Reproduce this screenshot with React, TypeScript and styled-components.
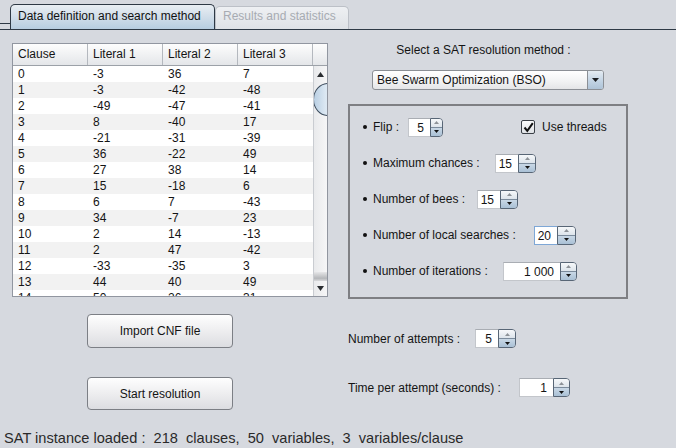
import React from 'react';
import styled, { createGlobalStyle } from 'styled-components';

const Global = createGlobalStyle`
  html, body { margin: 0; padding: 0; background: #d6d9df; }
  body {
    font-family: "Liberation Sans", Arial, sans-serif;
    font-size: 12px;
    color: #141414;
  }
  * { box-sizing: border-box; }
`;

const Page = styled.div`
  width: 676px;
  height: 448px;
  display: flex;
  flex-direction: column;
  background: #d6d9df;
  overflow: hidden;
`;

/* ---------- Tabs ---------- */
const TabStrip = styled.div`
  height: 30px;
  display: flex;
  align-items: flex-start;
  border-bottom: 1px solid #2e3945;
  flex: none;
`;

const TabLead = styled.div`
  width: 10px;
  height: 24px;
  border-bottom: 1px solid #2e3945;
`;

const Tab = styled.div<{ $active?: boolean; $w: number }>`
  width: ${(p) => p.$w}px;
  margin-top: ${(p) => (p.$active ? 4 : 6)}px;
  height: ${(p) => (p.$active ? 25 : 23)}px;
  padding: ${(p) => (p.$active ? '4px' : '2px')} 0 0 7px;
  line-height: 14px;
  font-size: 12px;
  white-space: nowrap;
  border: 1px solid ${(p) => (p.$active ? '#2e3945' : '#bcc0c7')};
  border-bottom: none;
  border-radius: 5px 5px 0 0;
  color: ${(p) => (p.$active ? '#111' : '#a7abb2')};
  background: ${(p) =>
    p.$active
      ? 'linear-gradient(#e9eef3 0%, #d3dfea 45%, #b7cde0 100%)'
      : 'linear-gradient(#eef0f3, #dfe2e6)'};
`;

/* ---------- Layout ---------- */
const Main = styled.div`
  flex: 1;
  display: flex;
  padding-top: 13px;
`;

const LeftCol = styled.div`
  width: 348px;
  padding-left: 12px;
  display: flex;
  flex-direction: column;
`;

const RightCol = styled.div`
  width: 280px;
  display: flex;
  flex-direction: column;
`;

/* ---------- Table ---------- */
const TableFrame = styled.div`
  width: 316px;
  height: 254px;
  border: 1px solid #9196a0;
  background: #fff;
  display: grid;
  grid-template-rows: 22px 1fr;
`;

const HeaderRow = styled.div`
  display: grid;
  grid-template-columns: 75px 75px 75px 75px 14px;
  background: linear-gradient(#fdfdfd, #e4e6e9);
  border-bottom: 1px solid #9ca1a8;
`;

const HeadCell = styled.div`
  padding-left: 5px;
  line-height: 21px;
  border-right: 1px solid #b4b8be;
  &:last-child { border-right: none; }
`;

const Body = styled.div`
  display: flex;
  overflow: hidden;
`;

const Rows = styled.div`
  width: 300px;
  overflow: hidden;
`;

const Row = styled.div<{ $odd: boolean }>`
  display: grid;
  grid-template-columns: 75px 75px 75px 75px;
  height: 16px;
  line-height: 16px;
  background: ${(p) => (p.$odd ? '#f2f2f2' : '#ffffff')};
`;

const Cell = styled.div`
  padding-left: 5px;
`;

const ScrollTrack = styled.div`
  width: 14px;
  display: flex;
  flex-direction: column;
  overflow: hidden;
  background: linear-gradient(to right, #e9eaec, #f6f6f7);
  border-left: 1px solid #c9ccd1;
`;

const ScrollBtn = styled.div<{ $h: number }>`
  height: ${(p) => p.$h}px;
  flex: none;
  display: flex;
  align-items: center;
  justify-content: center;
`;

const Thumb = styled.div`
  flex: none;
  width: 30px;
  height: 33px;
  margin-left: -1px;
  border-radius: 50%;
  border: 1px solid #3d4c5d;
  background: linear-gradient(to right, #b9cfe3, #dbe7f2 40%, #eef4fa);
`;

const TrackFill = styled.div`
  flex: 1;
`;

const TrackShade = styled.div`
  height: 9px;
  flex: none;
  background: linear-gradient(#e6e6e8, #b5b7ba 70%, #d8d9db);
`;

/* ---------- Buttons ---------- */
const PushButton = styled.button<{ $top: number; $h: number }>`
  margin: ${(p) => p.$top}px 0 0 75px;
  width: 146px;
  height: ${(p) => p.$h}px;
  border: 1px solid #7c7f85;
  border-radius: 4px;
  background: linear-gradient(#fefefe, #ececee 55%, #dcdde1);
  font-family: "Liberation Sans", Arial, sans-serif;
  font-size: 12px;
  color: #141414;
  padding: 0;
`;

/* ---------- Right side ---------- */
const MethodLabel = styled.div`
  line-height: 14px;
  text-align: center;
  padding-right: 9px;
`;

const Combo = styled.div`
  margin: 13px 0 0 24px;
  width: 232px;
  height: 20px;
  border: 1px solid #8b8f95;
  border-radius: 3px;
  display: flex;
  align-items: stretch;
  overflow: hidden;
  background: linear-gradient(#ffffff, #f1f2f3 60%, #e4e5e7);
`;

const ComboText = styled.div`
  flex: 1;
  padding-left: 4px;
  line-height: 18px;
`;

const ComboArrow = styled.div`
  width: 16px;
  border-left: 1px solid #8b8f95;
  background: linear-gradient(#e4ebf2, #c3d4e4 55%, #aec3d7);
  display: flex;
  align-items: center;
  justify-content: center;
`;

const ParamBox = styled.div`
  margin-top: 14px;
  height: 195px;
  border: 2px solid #7e7f83;
  padding: 11px 0 0 13px;
  display: flex;
  flex-direction: column;
  gap: 16px;
`;

const ParamRow = styled.div`
  height: 20px;
  display: flex;
  align-items: center;
`;

const Bullet = styled.span`
  width: 4px;
  height: 4px;
  border-radius: 50%;
  background: #111;
  margin-right: 6px;
  flex: none;
`;

const Label = styled.span<{ $w: number }>`
  width: ${(p) => p.$w}px;
  flex: none;
  white-space: nowrap;
`;

const Spinner = styled.div`
  display: flex;
  height: 19px;
  flex: none;
`;

const SpinField = styled.div<{ $w: number; $focus?: boolean }>`
  width: ${(p) => p.$w}px;
  height: 100%;
  background: #fff;
  border: 1px solid ${(p) => (p.$focus ? '#7ea7d6' : '#c3c6cb')};
  border-top-color: ${(p) => (p.$focus ? '#7ea7d6' : '#a9adb3')};
  border-right: none;
  text-align: right;
  padding-right: 6px;
  line-height: 18px;
  font-size: 12px;
`;

const SpinButtons = styled.div<{ $w: number }>`
  width: ${(p) => p.$w}px;
  height: 100%;
  display: flex;
  flex-direction: column;
  border: 1px solid #586676;
  border-radius: 0 4px 4px 0;
  overflow: hidden;
`;

const SpinHalf = styled.div<{ $down?: boolean }>`
  flex: 1;
  display: flex;
  align-items: center;
  justify-content: center;
  background: ${(p) =>
    p.$down
      ? 'linear-gradient(#c9d8e6, #a9c0d5)'
      : 'linear-gradient(#f6f8fa, #dde4eb)'};
  border-top: ${(p) => (p.$down ? '1px solid #7b8b9c' : 'none')};
`;

const CheckWrap = styled.div`
  margin-left: 78px;
  display: flex;
  align-items: center;
  gap: 7px;
`;

const CheckBox = styled.div`
  width: 14px;
  height: 14px;
  border: 1px solid #3a3f46;
  border-radius: 2px;
  background: linear-gradient(#fbfbfc, #dfe2e6);
  display: flex;
  align-items: center;
  justify-content: center;
`;

const PlainRow = styled.div<{ $top: number }>`
  margin-top: ${(p) => p.$top}px;
  height: 19px;
  display: flex;
  align-items: center;
`;

const Status = styled.div`
  height: 19px;
  flex: none;
  padding-left: 4px;
  line-height: 19px;
  font-size: 14.6px;
  color: #2a2a2a;
  white-space: pre;
`;

/* ---------- Small drawings ---------- */
const Tri = ({ dir, color, w = 7, h = 4 }: { dir: 'up' | 'down'; color: string; w?: number; h?: number }) => (
  <svg width={w} height={h} viewBox={`0 0 ${w} ${h}`} style={{ display: 'block' }}>
    {dir === 'up' ? (
      <polygon points={`0,${h} ${w},${h} ${w / 2},0`} fill={color} />
    ) : (
      <polygon points={`0,0 ${w},0 ${w / 2},${h}`} fill={color} />
    )}
  </svg>
);

const Spin = ({ value, field, btn, focus }: { value: string; field: number; btn: number; focus?: boolean }) => (
  <Spinner>
    <SpinField $w={field} $focus={focus}>{value}</SpinField>
    <SpinButtons $w={btn}>
      <SpinHalf>
        <Tri dir="up" color="#8d9298" w={5} h={3} />
      </SpinHalf>
      <SpinHalf $down>
        <Tri dir="down" color="#111" w={5} h={3} />
      </SpinHalf>
    </SpinButtons>
  </Spinner>
);

const rows: string[][] = [
  ['0', '-3', '36', '7'],
  ['1', '-3', '-42', '-48'],
  ['2', '-49', '-47', '-41'],
  ['3', '8', '-40', '17'],
  ['4', '-21', '-31', '-39'],
  ['5', '36', '-22', '49'],
  ['6', '27', '38', '14'],
  ['7', '15', '-18', '6'],
  ['8', '6', '7', '-43'],
  ['9', '34', '-7', '23'],
  ['10', '2', '14', '-13'],
  ['11', '2', '47', '-42'],
  ['12', '-33', '-35', '3'],
  ['13', '44', '40', '49'],
  ['14', '50', '26', '31'],
];

const params = [
  { label: 'Maximum chances :', w: 122, value: '15', field: 23, btn: 18 },
  { label: 'Number of bees :', w: 104, value: '15', field: 23, btn: 18 },
  { label: 'Number of local searches :', w: 161, value: '20', field: 23, btn: 19, focus: true },
  { label: 'Number of iterations :', w: 130, value: '1 000', field: 57, btn: 17 },
];

export default function App() {
  return (
    <Page>
      <Global />
      <TabStrip>
        <TabLead />
        <Tab $active $w={205}>Data definition and search method</Tab>
        <Tab $w={134}>Results and statistics</Tab>
      </TabStrip>
      <Main>
        <LeftCol>
          <TableFrame>
            <HeaderRow>
              <HeadCell>Clause</HeadCell>
              <HeadCell>Literal 1</HeadCell>
              <HeadCell>Literal 2</HeadCell>
              <HeadCell>Literal 3</HeadCell>
              <HeadCell />
            </HeaderRow>
            <Body>
              <Rows>
                {rows.map((r, i) => (
                  <Row key={i} $odd={i % 2 === 1}>
                    {r.map((c, j) => (
                      <Cell key={j}>{c}</Cell>
                    ))}
                  </Row>
                ))}
              </Rows>
              <ScrollTrack>
                <ScrollBtn $h={17}>
                  <Tri dir="up" color="#2a2d31" w={7} h={5} />
                </ScrollBtn>
                <Thumb />
                <TrackFill />
                <TrackShade />
                <ScrollBtn $h={15}>
                  <Tri dir="down" color="#2a2d31" w={7} h={5} />
                </ScrollBtn>
              </ScrollTrack>
            </Body>
          </TableFrame>
          <PushButton $top={17} $h={34}>Import CNF file</PushButton>
          <PushButton $top={29} $h={33}>Start resolution</PushButton>
        </LeftCol>
        <RightCol>
          <MethodLabel>Select a SAT resolution method :</MethodLabel>
          <Combo>
            <ComboText>Bee Swarm Optimization (BSO)</ComboText>
            <ComboArrow>
              <Tri dir="down" color="#1a1d21" w={7} h={4} />
            </ComboArrow>
          </Combo>
          <ParamBox>
            <ParamRow>
              <Bullet />
              <Label $w={35}>Flip :</Label>
              <Spin value="5" field={22} btn={13} />
              <CheckWrap>
                <CheckBox>
                  <svg width="11" height="11" viewBox="0 0 11 11">
                    <path d="M1.5 5.5 L4.3 8.8 L9.8 1.2" fill="none" stroke="#111" strokeWidth="2" />
                  </svg>
                </CheckBox>
                <span>Use threads</span>
              </CheckWrap>
            </ParamRow>
            {params.map((p) => (
              <ParamRow key={p.label}>
                <Bullet />
                <Label $w={p.w}>{p.label}</Label>
                <Spin value={p.value} field={p.field} btn={p.btn} focus={p.focus} />
              </ParamRow>
            ))}
          </ParamBox>
          <PlainRow $top={30}>
            <Label $w={127}>Number of attempts :</Label>
            <Spin value="5" field={23} btn={18} />
          </PlainRow>
          <PlainRow $top={30}>
            <Label $w={171}>Time per attempt (seconds) :</Label>
            <Spin value="1" field={34} btn={17} />
          </PlainRow>
        </RightCol>
      </Main>
      <Status>{'SAT instance loaded :  218  clauses,  50  variables,  3  variables/clause'}</Status>
    </Page>
  );
}
